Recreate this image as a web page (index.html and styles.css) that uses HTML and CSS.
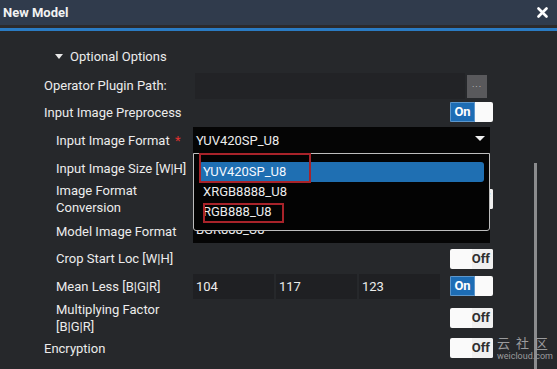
FILE: index.html
```html
<!DOCTYPE html>
<html lang="en">
<head>
    <meta charset="UTF-8">
    <title>New Model</title>
    <link rel="stylesheet" href="styles.css">
</head>
<body>
    <div class="dialog">
        <header class="titlebar">
            <span class="title">New Model</span>
            <svg class="close" width="11" height="11" viewBox="0 0 11 11">
                <path d="M1.5 1.5 L9.5 9.5 M9.5 1.5 L1.5 9.5" stroke="#fff" stroke-width="2.6" stroke-linecap="round"/>
            </svg>
        </header>
        <div class="rule-dark"></div>
        <div class="rule-blue"></div>

        <div class="content">
            <div class="section"><span class="caret"></span>Optional Options</div>

            <div class="row row-plugin">
                <span class="label">Operator Plugin Path:</span>
                <div class="path-field"></div>
                <span class="browse">&middot;&middot;&middot;</span>
            </div>

            <div class="row row-preprocess">
                <span class="label">Input Image Preprocess</span>
                <span></span><span></span>
                <div class="toggle on"><span class="seg">On</span><span class="rest"></span></div>
            </div>

            <div class="row sub row-format">
                <span class="label">Input Image Format <span class="req">*</span></span>
                <div class="select">
                    <span>YUV420SP_U8</span>
                    <span class="arrow"></span>
                    <ul class="menu">
                        <li class="active">YUV420SP_U8</li>
                        <li>XRGB8888_U8</li>
                        <li>RGB888_U8</li>
                        <span class="mark mark-1"></span>
                        <span class="mark mark-2"></span>
                    </ul>
                </div>
            </div>

            <div class="row sub row-size">
                <span class="label">Input Image Size [W|H]</span>
            </div>

            <div class="row sub row-conversion">
                <span class="label">Image Format<br>Conversion</span>
                <span></span><span></span>
                <div class="toggle off"><span class="rest"></span><span class="seg">Off</span></div>
            </div>

            <div class="row sub row-model">
                <span class="label">Model Image Format</span>
                <div class="black-field">BGR888_U8</div>
            </div>

            <div class="row sub row-crop">
                <span class="label">Crop Start Loc [W|H]</span>
                <span></span><span></span>
                <div class="toggle off"><span class="rest"></span><span class="seg">Off</span></div>
            </div>

            <div class="row sub row-mean">
                <span class="label">Mean Less [B|G|R]</span>
                <div class="triple">
                    <span class="cell">104</span>
                    <span class="cell">117</span>
                    <span class="cell">123</span>
                </div>
                <span></span>
                <div class="toggle on"><span class="seg">On</span><span class="rest"></span></div>
            </div>

            <div class="row sub row-factor">
                <span class="label">Multiplying Factor<br>[B|G|R]</span>
                <span></span><span></span>
                <div class="toggle off"><span class="rest"></span><span class="seg">Off</span></div>
            </div>

            <div class="row row-encrypt">
                <span class="label">Encryption</span>
                <span></span><span></span>
                <div class="toggle off"><span class="rest"></span><span class="seg">Off</span></div>
            </div>
        </div>

        <div class="scrollbar"></div>
        <div class="watermark">
            <span class="wm-cn">云 社 区</span>
            <span class="wm-url">weicloud.com</span>
        </div>
    </div>
</body>
</html>
```

FILE: styles.css
```css
* {
    margin: 0;
    padding: 0;
    box-sizing: border-box;
}

body {
    font-family: Roboto, "Liberation Sans", sans-serif;
    font-size: 13px;
    color: #ececec;
    background-color: #26282b;
    width: 557px;
    height: 369px;
    overflow: hidden;
}

.dialog {
    position: relative;
    height: 369px;
}

.titlebar {
    height: 25px;
    background-color: #303b4c;
    display: flex;
    align-items: center;
    justify-content: space-between;
    padding: 0 6px 0 3px;
}

.title {
    font-weight: 700;
    font-size: 13px;
    color: #f2f2f2;
}

.close {
    margin-right: 3px;
}

.rule-dark {
    height: 3px;
    background-color: #2c2a2b;
}

.rule-blue {
    height: 3px;
    background-color: #2a7bc3;
}

.content {
    padding: 10px 0 0 44px;
}

.section {
    height: 30px;
    display: flex;
    align-items: center;
    padding-left: 11px;
}

.caret {
    width: 0;
    height: 0;
    border-left: 4px solid transparent;
    border-right: 4px solid transparent;
    border-top: 5px solid #e8e8e8;
    margin-right: 7px;
}

.row {
    display: grid;
    grid-template-columns: 149px 247px 10px 43px;
    align-items: center;
}

.row.sub .label {
    padding-left: 12px;
}

.label {
    line-height: 17px;
    white-space: nowrap;
}

.req {
    color: #e0312f;
    margin-left: 2px;
}

.row-plugin { height: 29px; }
.row-preprocess { height: 24px; }
.row-format { height: 32px; }
.row-size { height: 24px; }
.row-conversion { height: 38px; }
.row-model { height: 27px; }
.row-crop { height: 27px; }
.row-mean { height: 28px; }
.row-factor { height: 36px; }
.row-encrypt { height: 24px; }

.row-plugin {
    grid-template-columns: 149px 270px 20px;
    column-gap: 2px;
}

.path-field {
    height: 26px;
    background-color: #222326;
}

.browse {
    height: 23px;
    margin-top: 2px;
    background-color: #59595c;
    color: #cfcfcf;
    font-size: 9px;
    display: flex;
    align-items: center;
    justify-content: center;
    letter-spacing: 1px;
}

.select {
    grid-column: 2 / 5;
    width: 297px;
    height: 26px;
    background-color: #050505;
    display: flex;
    align-items: center;
    justify-content: space-between;
    padding: 0 5px 0 3px;
    position: relative;
    z-index: 2;
}

.arrow {
    width: 0;
    height: 0;
    border-left: 5px solid transparent;
    border-right: 5px solid transparent;
    border-top: 5px solid #f0f0f0;
    margin-top: -3px;
}

.menu {
    list-style: none;
    position: absolute;
    top: 26px;
    left: 0;
    width: 297px;
    padding: 8px 5px 8px 5px;
    background-color: #030303;
    border: 1px solid #bdbdbd;
    border-radius: 0 0 3px 3px;
}

.menu li {
    height: 20px;
    line-height: 20px;
    padding-left: 4px;
}

.menu li.active {
    background-color: #1f6fb2;
    border-radius: 3px;
    color: #f4f8ff;
}

.mark {
    position: absolute;
    z-index: 3;
    border: 2px solid #a8232a;
}

.mark-1 {
    left: 5px;
    top: -1px;
    width: 112px;
    height: 30px;
}

.mark-2 {
    left: 9px;
    top: 49px;
    width: 81px;
    height: 20px;
}

.black-field {
    grid-column: 2 / 5;
    width: 297px;
    height: 23px;
    background-color: #050505;
    padding-left: 3px;
    line-height: 20px;
}

.triple {
    display: flex;
    gap: 2px;
    height: 25px;
}

.cell {
    flex: 1;
    background-color: #1f2023;
    padding-left: 3px;
    line-height: 25px;
}

.toggle {
    grid-column: 4;
    width: 43px;
    height: 20px;
    display: flex;
    border-radius: 2px;
    overflow: hidden;
    background-color: #fafafa;
    position: relative;
    z-index: 1;
}

.toggle .seg {
    font-weight: 700;
    font-size: 13px;
    line-height: 20px;
}

.toggle.on .seg {
    width: 25px;
    background-color: #1d6db5;
    color: #fff;
    text-align: center;
    border: 1px solid #5d97cc;
    line-height: 18px;
}

.toggle .rest {
    flex: 1;
}

.toggle.off .seg {
    color: #2e2e2e;
    padding-right: 3px;
    background-color: #f0f0f0;
}

.scrollbar {
    position: absolute;
    left: 534px;
    top: 163px;
    width: 3px;
    height: 206px;
    background-color: #8b8c8e;
}

.watermark {
    position: absolute;
    left: 497px;
    top: 335px;
    display: flex;
    flex-direction: column;
    align-items: flex-start;
    white-space: nowrap;
    color: #9a9b9d;
}

.wm-cn {
    font-family: "Noto Sans CJK SC", sans-serif;
    font-size: 13px;
    line-height: 16px;
    letter-spacing: 1.5px;
}

.wm-url {
    font-size: 9px;
    line-height: 10px;
}
```
